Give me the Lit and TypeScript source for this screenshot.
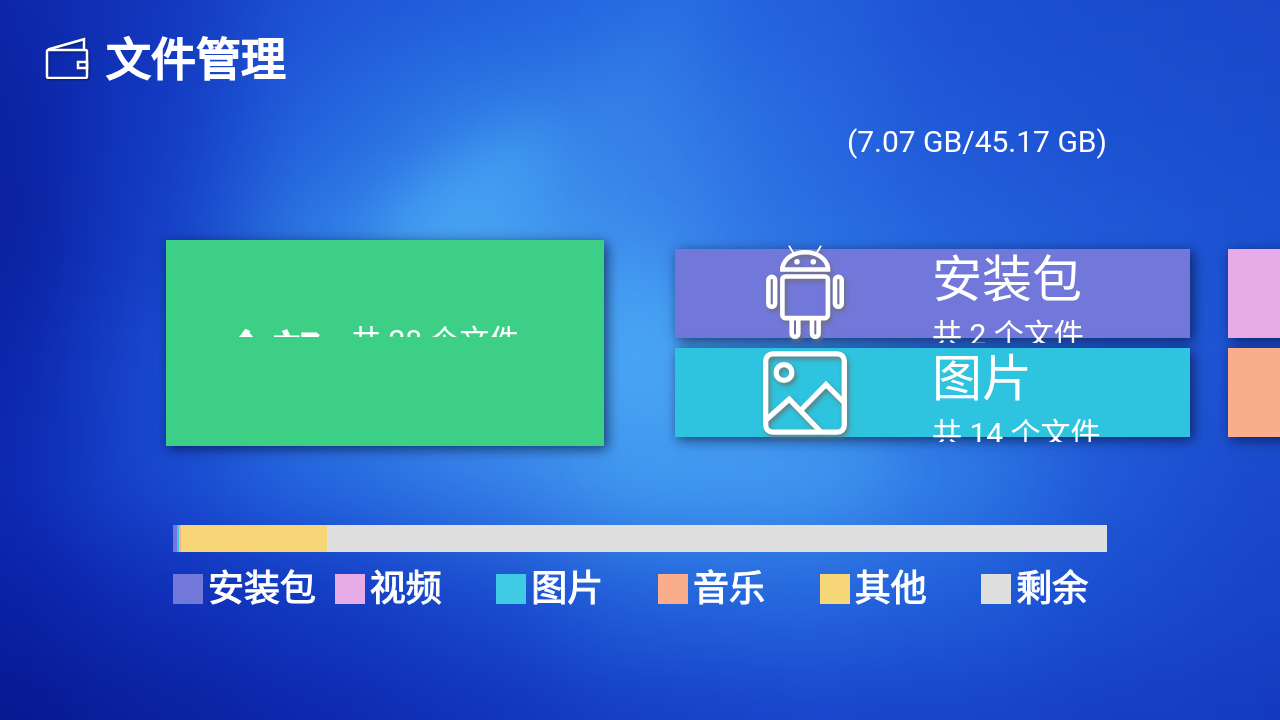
import { LitElement, html, css, svg } from "lit";
import { customElement } from "lit/decorators.js";

const BAR = [
  { color: "#7277da", share: 4 },
  { color: "#3ecbe3", share: 2 },
  { color: "#f9ad8b", share: 2 },
  { color: "#f6d676", share: 146 },
  { color: "#dfdfdf", share: 780 },
];

const LEGEND = [
  { label: "安装包", color: "#7277da" },
  { label: "视频", color: "#e7abe8" },
  { label: "图片", color: "#3ecbe3" },
  { label: "音乐", color: "#f9ad8b" },
  { label: "其他", color: "#f6d676" },
  { label: "剩余", color: "#dfdfdf" },
];

// Colour mesh of the wallpaper: rows every 120 units, columns every 160 units.
const MESH = [
  ["#0d26a8", "#1236bc", "#1e54d4", "#215edc", "#276ae2", "#2360dc", "#1c50d2", "#1a4ccc", "#1a48ca"],
  ["#0a20a0", "#123ac2", "#2464de", "#2f7ce6", "#3580e8", "#2868e0", "#1f57d6", "#1c50d0", "#1a4ccc"],
  ["#0a1f9e", "#143ec6", "#2f7ce6", "#48a2f2", "#3c8aec", "#2c70e4", "#2362dc", "#1f58d6", "#1b50d0"],
  ["#0b24a8", "#1848d0", "#3480e8", "#46a0f2", "#4aa6f5", "#3e90ee", "#2a6ee2", "#215cda", "#1c50d0"],
  ["#0c28b0", "#1848d0", "#2568e0", "#347ee8", "#429aef", "#4096ef", "#2e7ae6", "#1f56d6", "#1a48ca"],
  ["#0a20a4", "#0f2eb6", "#1239c2", "#1848cc", "#2260da", "#2666de", "#205cd8", "#1a4cce", "#1743c6"],
  ["#07188f", "#0a209e", "#0d28ae", "#1032b8", "#153ec4", "#1843ca", "#1743c8", "#153ec2", "#143abe"],
];

const walletIcon = html`<svg class="wallet" viewBox="0 -2 44 44" aria-hidden="true">
  <rect x="2" y="13" width="40" height="28" rx="1.5" />
  <path d="M3 12.5 39 2.2V13" />
  <rect x="33" y="25" width="9" height="6" />
</svg>`;

const androidIcon = html`<svg class="glyph" viewBox="0 4.5 90 98" aria-hidden="true">
  <g stroke-width="4.6">
    <path d="M22.4 29V27.5C24 18 33 11.7 45.2 11.7S66.4 18 68 27.5V29Z" />
    <rect x="22.4" y="36" width="45.5" height="41.6" rx="3" />
    <rect x="8.4" y="36.3" width="6.7" height="30" rx="3.3" />
    <rect x="75" y="36.3" width="6.7" height="30" rx="3.3" />
    <path d="M31.7 78V93a3.3 3.3 0 0 0 6.6 0V78M52 78V93a3.3 3.3 0 0 0 6.6 0V78" />
  </g>
  <path d="M29 5.2 33.7 13M61 5.2 56.3 13" stroke-width="1.8" />
  <g class="solid"><circle cx="37" cy="21.3" r="2.8" /><circle cx="53.3" cy="21.3" r="2.8" /></g>
</svg>`;

const pictureIcon = html`<svg class="glyph" viewBox="0 0 90 98" aria-hidden="true">
  <g stroke-width="5.3">
    <rect x="5.7" y="9.8" width="78.6" height="78.4" rx="7" />
    <circle cx="24" cy="28.5" r="7.9" />
    <path d="M6.5 75.5 29.2 55.2 61 88M41.5 65.5 66 40.5 84 58.5" />
  </g>
</svg>`;

@customElement("wall-paper")
class WallPaper extends LitElement {
  static styles = css`
    :host { display: block; overflow: hidden; background: #1847cc; }
    svg { display: block; width: 100%; height: 100%; }
  `;

  render() {
    const blob = (cx: number, cy: number, rx: number, ry: number, turn: number, fill: string, opacity: number) =>
      svg`<ellipse cx=${cx} cy=${cy} rx=${rx} ry=${ry} transform="rotate(${turn} ${cx} ${cy})" fill=${fill} opacity=${opacity} />`;
    const cells = MESH.map((row, r) =>
      row.map((fill, c) => {
        const left = c === 0 ? -400 : c * 160 - 80;
        const right = c === row.length - 1 ? 1680 : c * 160 + 81;
        const top = r === 0 ? -400 : r * 120 - 60;
        const bottom = r === MESH.length - 1 ? 1120 : r * 120 + 61;
        return svg`<rect x=${left} y=${top} width=${right - left} height=${bottom - top} fill=${fill} />`;
      })
    );
    return html`<svg viewBox="0 0 1280 720" preserveAspectRatio="none" aria-hidden="true">
      <defs>
        <filter id="mesh" filterUnits="userSpaceOnUse" x="-400" y="-400" width="2080" height="1520" color-interpolation-filters="sRGB">
          <feGaussianBlur stdDeviation="56 44" />
        </filter>
        <filter id="near" x="-100%" y="-100%" width="300%" height="300%" color-interpolation-filters="sRGB">
          <feGaussianBlur stdDeviation="30" />
        </filter>
      </defs>
      <g filter="url(#mesh)">${cells}</g>
      <g filter="url(#near)">
        ${blob(470, 200, 110, 34, -38, "#4caaf5", 0.65)}
        ${blob(650, 60, 120, 26, -56, "#3c8aec", 0.25)}
        ${blob(640, 330, 60, 80, -30, "#4ca8f5", 0.4)}
        ${blob(750, 460, 140, 30, 6, "#459cf2", 0.4)}
      </g>
    </svg>`;
  }
}

@customElement("app-root")
class AppRoot extends LitElement {
  static styles = css`
    :host {
      display: grid;
      grid-template-columns: minmax(0, 1fr);
      min-height: 100vh;
      overflow: hidden;
      color: #fff;
      font-family: Roboto, "Noto Sans CJK SC", sans-serif;
    }
    wall-paper, .page { grid-area: 1 / 1; }
    .page { z-index: 1; min-width: 0; }
    header { display: flex; align-items: flex-start; gap: 17px; padding: 35px 45px 0; }
    h1 { margin: 0; font-size: 45px; line-height: 52px; font-weight: 400; -webkit-text-stroke: 2px; }
    svg { flex: none; fill: none; stroke: #fff; }
    .wallet { width: 44px; height: 44px; stroke-width: 2.5; filter: drop-shadow(1px 1px 1px rgba(0, 0, 0, 0.4)); }
    .capacity { margin: 37px 173px 0; text-align: right; font-size: 30px; line-height: 36px; }
    .strip { display: flex; align-items: center; padding: 80px 0 79px 166px; overflow: hidden; }
    .columns { display: grid; grid-auto-flow: column; grid-template-rows: auto auto; gap: 10px 38px; margin-left: 71px; }
    .card {
      display: flex;
      flex: none;
      box-sizing: border-box;
      width: 515px;
      height: 89px;
      margin: 0;
      padding: 0 0 0 85px;
      gap: 82px;
      align-items: center;
      border: 0;
      color: inherit;
      font: inherit;
      text-align: left;
      white-space: nowrap;
      overflow: clip;
      overflow-clip-margin: 5px;
      box-shadow: 3px 3px 12px rgba(0, 10, 40, 0.65);
    }
    .all { width: 438px; height: 206px; padding: 0; background: #3dcf86; align-items: flex-start; }
    .summary { display: flex; align-items: flex-start; box-sizing: border-box; width: 100%; height: 97px; padding: 83px 0 0 55px; gap: 30px; overflow: hidden; }
    .apk { background: #7277da; }
    .video { background: #e7abe8; }
    .image { background: #2ec3de; }
    .music { background: #f9ad8b; }
    .glyph { width: 90px; height: 98px; filter: drop-shadow(2px 3px 2px rgba(110, 110, 110, 0.8)); }
    .solid { fill: #fff; stroke: none; }
    .text { display: flex; flex-direction: column; align-self: flex-start; gap: 6px; }
    .name { font-size: 50px; line-height: 62px; }
    .strong { font-weight: 400; -webkit-text-stroke: 2px; line-height: 66px; }
    .count { font-size: 30px; line-height: 36px; }
    .usage { margin: 0 173px; }
    .bar { display: flex; height: 27px; }
    .legend { display: grid; grid-template-columns: repeat(6, minmax(0, 1fr)); column-gap: 36px; margin: 14px 0 0; padding: 0; list-style: none; }
    .legend li { display: flex; align-items: center; gap: 5px; font-size: 36px; line-height: 46px; font-weight: 400; -webkit-text-stroke: 1px; white-space: nowrap; }
    .swatch { flex: none; width: 30px; height: 30px; }
  `;

  render() {
    return html`
      <wall-paper></wall-paper>
      <div class="page">
        <header>${walletIcon}<h1>文件管理</h1></header>
        <p class="capacity">(7.07 GB/45.17 GB)</p>
        <main class="strip">
          <button class="card all">
            <span class="summary"><span class="name strong">全部</span><span class="count">共 28 个文件</span></span>
          </button>
          <div class="columns">
            <button class="card apk">
              ${androidIcon}
              <span class="text"><span class="name">安装包</span><span class="count">共 2 个文件</span></span>
            </button>
            <button class="card image">
              ${pictureIcon}
              <span class="text"><span class="name">图片</span><span class="count">共 14 个文件</span></span>
            </button>
            <button class="card video" aria-label="视频"></button>
            <button class="card music" aria-label="音乐"></button>
          </div>
        </main>
        <section class="usage">
          <div class="bar">
            ${BAR.map((b) => html`<span style="flex: ${b.share} 0 0; background: ${b.color}"></span>`)}
          </div>
          <ul class="legend">
            ${LEGEND.map((l) => html`<li><span class="swatch" style="background: ${l.color}"></span>${l.label}</li>`)}
          </ul>
        </section>
      </div>
    `;
  }
}
